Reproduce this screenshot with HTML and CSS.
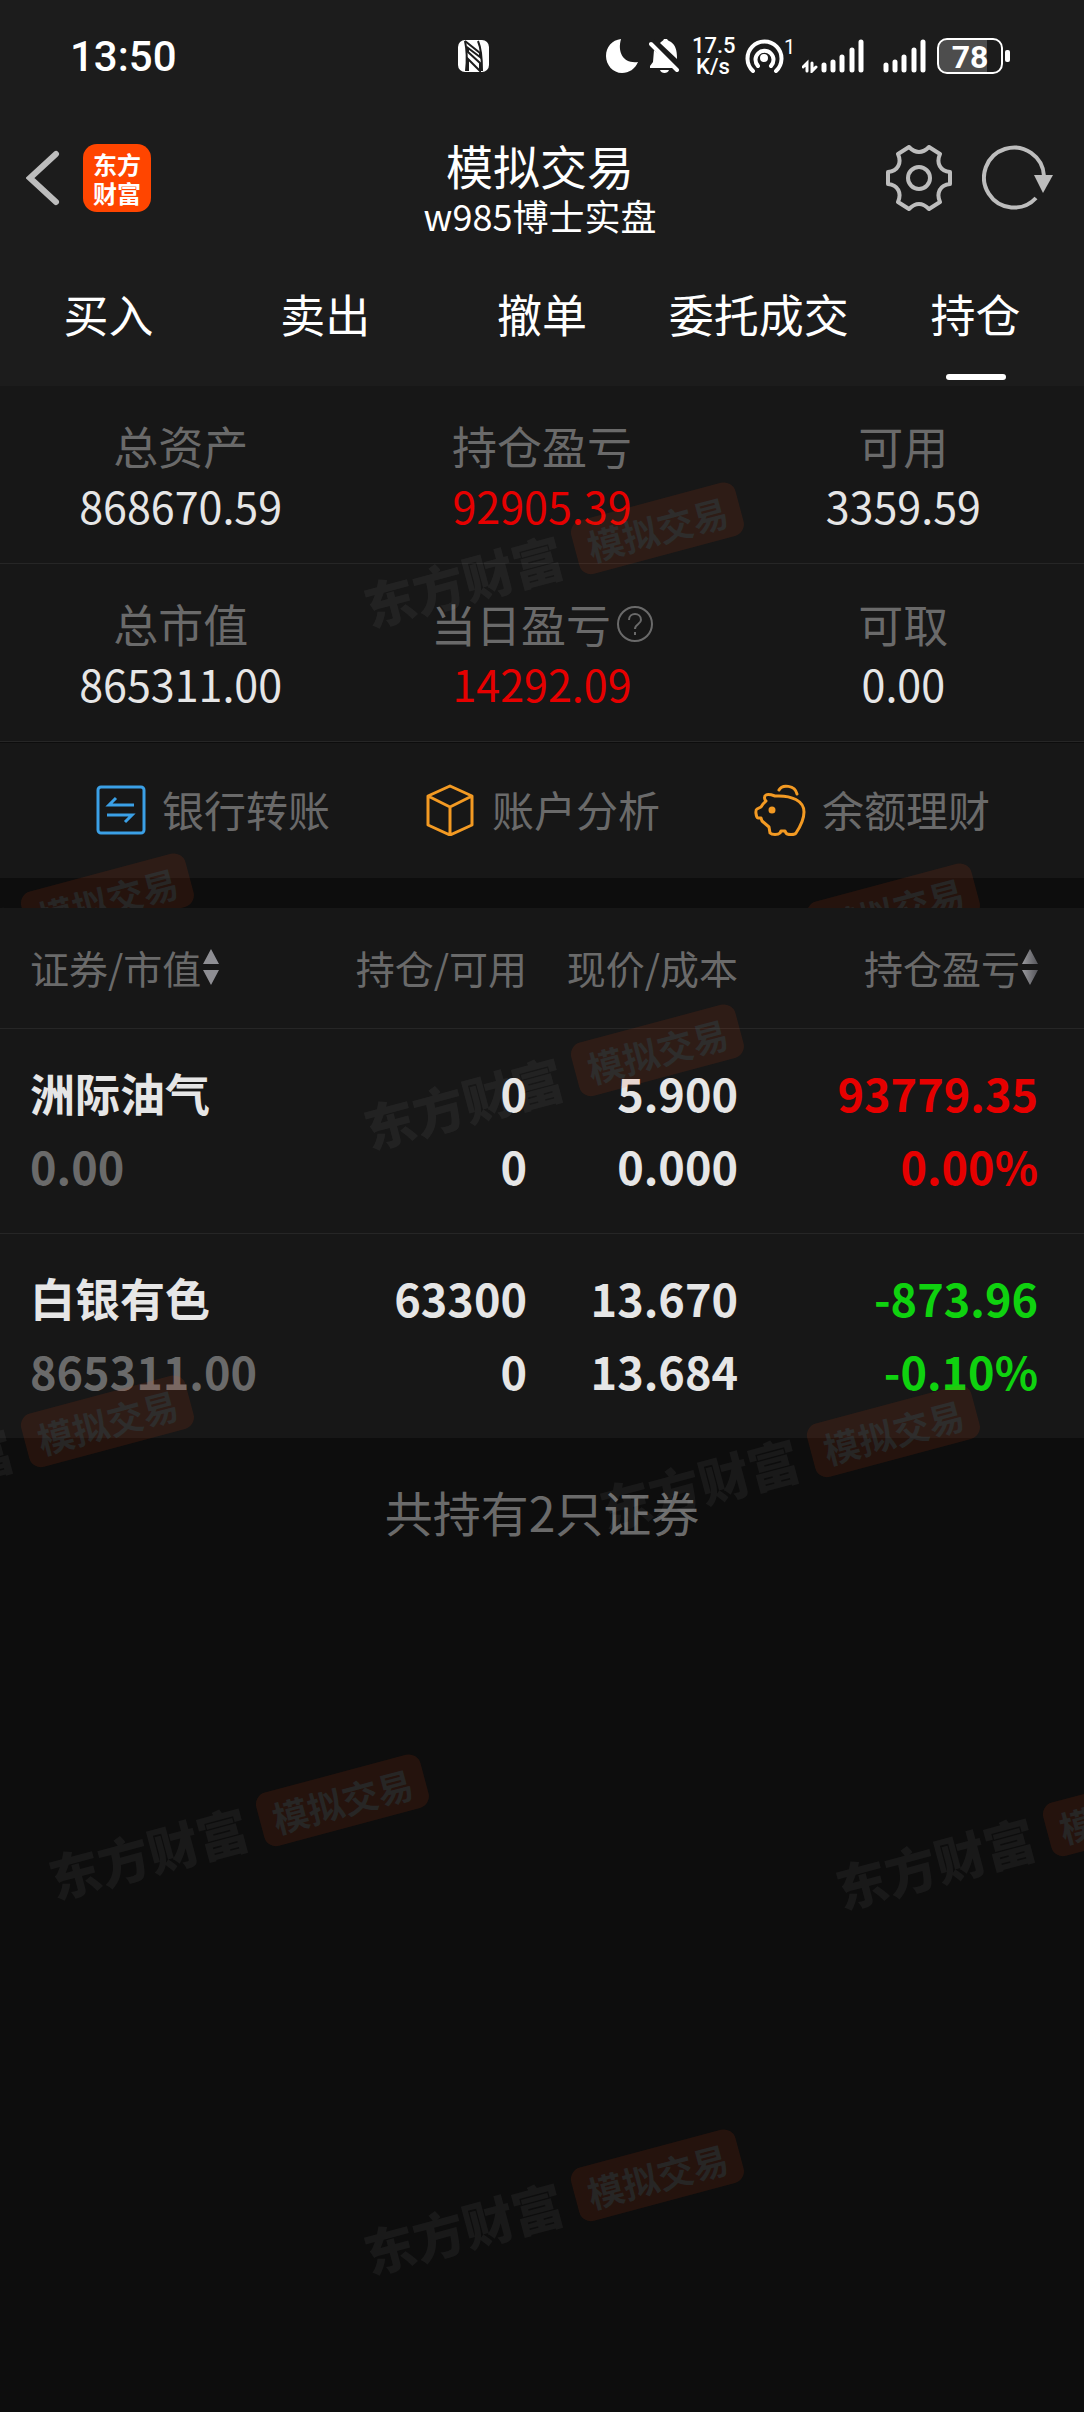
FILE: index.html
```html
<!DOCTYPE html>
<html lang="zh-CN">
<head>
<meta charset="utf-8">
<meta name="viewport" content="width=device-width, initial-scale=1">
<title>模拟交易</title>
<link rel="stylesheet" href="styles.css">
</head>
<body>
<header class="top">
  <div class="status">
    <span class="clock">13:50</span>
    <svg class="nfc" width="32" height="32" viewBox="0 0 32 32" aria-label="NFC">
      <rect x="0" y="0" width="31" height="32" rx="7" fill="#fff"/>
      <path d="M7 1C9 10 9 22 8 31M20 1C23 8 24 20 24 31" fill="none" stroke="#1c1c1c" stroke-width="2"/>
      <path d="M7 1L22 13V17L10 8V12L22 23V31L10 19V31" fill="none" stroke="#1c1c1c" stroke-width="2"/>
    </svg>
    <div class="status-icons">
      <svg width="32" height="34" viewBox="0 0 32 34"><path d="M15 0C11 14 18 25 32 23C29 30 23 34 16 34C7 34 0 26 0 17C0 8 6 1 15 0Z" fill="#fff"/></svg>
      <svg width="32" height="34" viewBox="0 0 32 34"><path d="M11 4C13 2 14 2 15 0h3c1 2 3 2 4 3c4 3 6 7 6 17zM5 11L27 29H1v-2l3-4zM11 31h9c-1 4-8 4-9 0z" fill="#fff"/><path d="M4 2L30 27" stroke="#1c1c1c" stroke-width="4"/><path d="M2 5L28 31" stroke="#fff" stroke-width="4" stroke-linecap="round"/></svg>
      <span class="speed">17.5<br>K/s</span>
      <span class="hotspot">
        <svg width="39" height="34" viewBox="0 0 39 34" fill="none" stroke="#fff" stroke-width="4" stroke-linecap="round"><path d="M8 32A17 17 0 1 1 31 32M13 27A9 9 0 1 1 26 27"/><circle cx="19" cy="19" r="2"/></svg>
        <sup>1</sup>
      </span>
      <svg width="70" height="34" viewBox="0 0 70 34" fill="none" stroke="#fff" stroke-linecap="round"><path d="M5 32V24L1 28M10 24V32L14 28" stroke-width="3"/><path d="M22 26v5M31 23v8M40 18v13M50 11v20M59 3v28" stroke-width="5"/></svg>
      <svg width="43" height="34" viewBox="0 0 43 34" fill="none" stroke="#fff" stroke-linecap="round"><path d="M3 26v5M12 23v8M21 18v13M31 11v20M40 3v28" stroke-width="5"/></svg>
      <span class="battery"><span class="battery-cell">78</span><span class="battery-tip"></span></span>
    </div>
  </div>

  <div class="titlebar">
    <div class="side">
      <button class="icon-btn" aria-label="返回"><svg width="34" height="56" viewBox="0 0 34 56"><path d="M30 4L4 28L30 52" fill="none" stroke="#bdbdbd" stroke-width="6" stroke-linecap="round"/></svg></button>
      <a class="logo" href="#"><span>东方</span><span>财富</span></a>
    </div>
    <div class="title">
      <h1>模拟交易</h1>
      <p>w985博士实盘</p>
    </div>
    <div class="side side-end">
      <button class="icon-btn" aria-label="设置"><svg width="66" height="66" viewBox="0 0 66 66" fill="none" stroke="#bdbdbd" stroke-width="4" stroke-linejoin="round"><path d="M23 2Q33 12 43 2L54 9C50 18 54 26 64 27V39C54 40 50 48 54 57L43 64Q33 54 23 64L12 57C16 48 12 40 2 39V27C12 26 16 18 12 9Z"/><circle cx="33" cy="33" r="11"/></svg></button>
      <button class="icon-btn" aria-label="刷新"><svg width="72" height="66" viewBox="0 0 72 66"><path d="M54 53A30 30 0 1 1 62 31" fill="none" stroke="#bdbdbd" stroke-width="4"/><path d="M52 30H71L61 48Z" fill="#bdbdbd"/></svg></button>
    </div>
  </div>

  <nav class="tabs">
    <a href="#">买入</a>
    <a href="#">卖出</a>
    <a href="#">撤单</a>
    <a href="#">委托成交</a>
    <a href="#" class="active" aria-current="page">持仓</a>
  </nav>
</header>

<main>
  <section class="account">
    <dl class="summary">
      <div><dt>总资产</dt><dd>868670.59</dd></div>
      <div><dt>持仓盈亏</dt><dd class="up">92905.39</dd></div>
      <div><dt>可用</dt><dd>3359.59</dd></div>
    </dl>
    <dl class="summary">
      <div><dt>总市值</dt><dd>865311.00</dd></div>
      <div><dt>当日盈亏<button class="help" aria-label="说明"><svg width="36" height="36" viewBox="1 1 36 36" fill="none" stroke="#6a6a6a" stroke-width="2"><circle cx="19" cy="19" r="17"/><path d="M13 15C13 7 25 7 25 15C25 19 19 19 19 24"/><path d="M19 27v3"/></svg></button></dt><dd class="up">14292.09</dd></div>
      <div><dt>可取</dt><dd>0.00</dd></div>
    </dl>
    <div class="links">
      <a href="#"><svg width="52" height="52" viewBox="0 0 52 52" fill="none" stroke="#3ba0e6" stroke-width="3"><rect x="4" y="3" width="46" height="46" rx="3"/><path d="M40 21H15L22 14M13 31H38L31 38"/></svg>银行转账</a>
      <a href="#"><svg width="52" height="52" viewBox="0 0 52 52" fill="none" stroke="#f39a23" stroke-width="3" stroke-linejoin="round"><path d="M26 2L48 12V41L26 51L4 41V12ZM4 12L26 23L48 12M26 23V51"/></svg>账户分析</a>
      <a href="#"><svg width="52" height="52" viewBox="0 0 52 52" fill="none" stroke="#f39a23" stroke-width="3" stroke-linejoin="round" stroke-linecap="round"><path d="M12 11C14 10 18 11 21 12C38 11 50 17 50 28C50 36 46 43 42 49C41 51 33 51 32 49L31 47H27L26 49C24 51 18 51 16 49L15 43L8 37L7 34H4C2 33 1 26 3 25L7 23L9 20L12 17C10 15 10 12 12 11Z"/><path d="M25 6C28 0 41 1 43 10"/><circle cx="18" cy="26" r="2" fill="#f39a23"/></svg>余额理财</a>
    </div>
    <div class="marks" aria-hidden="true">
      <div class="mark mark-1"><b>东方财富</b><i>模拟交易</i></div>
      <div class="mark mark-2"><b>东方财富</b><i>模拟交易</i></div>
      <div class="mark mark-3"><b>东方财富</b><i>模拟交易</i></div>
    </div>
  </section>

  <section class="holdings">
    <table>
      <colgroup><col><col class="c-qty"><col class="c-price"><col class="c-profit"></colgroup>
      <thead>
        <tr>
          <th scope="col"><button class="sort">证券/市值<svg width="16" height="36" viewBox="0 0 16 36" fill="#8e8e93"><path d="M8 0L16 15H0ZM0 21H16L8 36Z"/></svg></button></th>
          <th scope="col">持仓/可用</th>
          <th scope="col">现价/成本</th>
          <th scope="col"><button class="sort">持仓盈亏<svg width="16" height="36" viewBox="0 0 16 36"><defs><linearGradient id="fade"><stop offset="0" stop-color="#9a9a9e"/><stop offset="1" stop-color="#55555a"/></linearGradient></defs><path d="M8 0L16 15H0ZM0 21H16L8 36Z" fill="url(#fade)"/></svg></button></th>
        </tr>
      </thead>
      <tbody>
        <tr>
          <td><span>洲际油气</span><span class="dim">0.00</span></td>
          <td><span>0</span><span>0</span></td>
          <td><span>5.900</span><span>0.000</span></td>
          <td class="up"><span>93779.35</span><span>0.00%</span></td>
        </tr>
        <tr>
          <td><span>白银有色</span><span class="dim">865311.00</span></td>
          <td><span>63300</span><span>0</span></td>
          <td><span>13.670</span><span>13.684</span></td>
          <td class="down"><span>-873.96</span><span>-0.10%</span></td>
        </tr>
      </tbody>
    </table>
    <p class="count">共持有2只证券</p>
    <div class="marks" aria-hidden="true">
      <div class="mark mark-1"><b>东方财富</b><i>模拟交易</i></div>
      <div class="mark mark-2"><b>东方财富</b><i>模拟交易</i></div>
      <div class="mark mark-3"><b>东方财富</b><i>模拟交易</i></div>
      <div class="mark mark-4"><b>东方财富</b><i>模拟交易</i></div>
      <div class="mark mark-5"><b>东方财富</b><i>模拟交易</i></div>
      <div class="mark mark-6"><b>东方财富</b><i>模拟交易</i></div>
    </div>
  </section>
</main>
</body>
</html>
```
FILE: styles.css
```css
* {
  box-sizing: border-box;
  margin: 0;
  padding: 0;
}

body {
  display: flex;
  flex-direction: column;
  min-height: 100vh;
  background: #0d0d0d;
  color: #e6e6e6;
  font-family: "Noto Sans CJK SC", "Noto Sans", sans-serif;
  font-size: 45px;
}

button {
  background: none;
  border: 0;
  color: inherit;
  font: inherit;
}

a {
  color: inherit;
  text-decoration: none;
}

svg {
  display: block;
  flex: none;
}

.top {
  background: #1c1c1c;
  color: #fff;
}

/* status bar */
.status {
  display: flex;
  align-items: center;
  height: 112px;
  padding: 0 74px 0 70px;
  font-family: Roboto, "Noto Sans CJK SC", sans-serif;
}

.clock {
  width: 388px;
  font-size: 42px;
  font-weight: 500;
}

.status-icons {
  display: flex;
  align-items: center;
  gap: 11px;
  margin-left: auto;
}

.speed {
  width: 42px;
  font-size: 22px;
  font-weight: 500;
  line-height: 21px;
  text-align: center;
}

.hotspot {
  display: flex;
  width: 46px;
}

.hotspot sup {
  font-size: 20px;
  line-height: 16px;
}

.battery {
  display: flex;
  align-items: center;
  gap: 2px;
  width: 73px;
}

.battery-cell {
  width: 66px;
  height: 36px;
  border: 2px solid #fff;
  border-radius: 10px;
  background: linear-gradient(90deg, #4d4d4d 78%, transparent 78%);
  font-size: 32px;
  font-weight: 700;
  line-height: 34px;
  text-align: center;
}

.battery-tip {
  width: 5px;
  height: 12px;
  border-radius: 2px;
  background: #fff;
}

/* title bar */
.titlebar {
  display: flex;
  align-items: center;
  height: 132px;
  padding: 0 30px 0 26px;
}

.side {
  display: flex;
  flex: 1;
  align-items: center;
  gap: 23px;
}

.side-end {
  justify-content: flex-end;
  gap: 30px;
}

.logo {
  display: flex;
  flex-direction: column;
  align-items: center;
  justify-content: center;
  width: 68px;
  height: 68px;
  border-radius: 14px;
  background: #ff4500;
  font-size: 24px;
  font-weight: 700;
  line-height: 29px;
}

.title {
  padding-top: 22px;
  text-align: center;
}

.title h1 {
  font-size: 47px;
  font-weight: 400;
  line-height: 52px;
}

.title p {
  font-size: 36px;
  line-height: 48px;
}

/* tabs */
.tabs {
  display: grid;
  grid-template-columns: repeat(5, 1fr);
  height: 142px;
  text-align: center;
  line-height: 140px;
}

.tabs .active::after {
  content: "";
  display: block;
  width: 60px;
  height: 6px;
  margin: -10px auto 0;
  border-radius: 3px;
  background: #fff;
}

/* account summary */
main {
  display: flex;
  flex: 1;
  flex-direction: column;
}

.account {
  position: relative;
  padding-bottom: 30px;
}

.summary {
  display: grid;
  grid-template-columns: repeat(3, 1fr);
  padding: 30px 0 29px;
  border-bottom: 1px solid #262626;
  background: #171717;
  line-height: 60px;
  text-align: center;
}

.summary dt {
  display: flex;
  align-items: center;
  justify-content: center;
  color: #6a6a6a;
}

.summary dd {
  font-size: 43px;
  line-height: 58px;
}

.help {
  margin-left: 6px;
}

.links {
  display: grid;
  grid-template-columns: repeat(3, 1fr);
  margin-top: 1px;
  padding: 0 47px;
  background: #171717;
  color: #6a6a6a;
  font-size: 42px;
  line-height: 132px;
}

.links a {
  display: flex;
  align-items: flex-start;
  justify-content: center;
  gap: 16px;
  height: 135px;
}

.links svg {
  margin-top: 41px;
}

.up,
.summary .up {
  color: #e60000;
}

.down {
  color: #0fd20f;
}

.dim {
  color: #6a6a6a;
}

/* holdings */
.holdings {
  position: relative;
  flex: 1;
}

table {
  width: 100%;
  border-collapse: collapse;
  table-layout: fixed;
  background: #171717;
}

.c-qty {
  width: 200px;
}

.c-price {
  width: 211px;
}

.c-profit {
  width: 346px;
}

th,
td {
  text-align: right;
}

th {
  height: 120px;
  padding-bottom: 2px;
  border-bottom: 1px solid #262626;
  color: #6a6a6a;
  font-size: 39px;
  font-weight: 400;
}

th:first-child,
td:first-child {
  padding-left: 30px;
  text-align: left;
}

th:last-child,
td:last-child {
  padding-right: 46px;
}

.sort {
  display: inline-flex;
  align-items: center;
  gap: 2px;
}

td {
  padding: 27px 0 31px;
  font-weight: 700;
  line-height: 73px;
}

td span {
  display: block;
}

tbody tr + tr td {
  border-top: 1px solid #262626;
}

.count {
  color: #6a6a6a;
  font-size: 48px;
  line-height: 146px;
  text-align: center;
}

/* slanted brand marks laid over each section */
.marks {
  position: absolute;
  inset: 0;
  overflow: hidden;
  pointer-events: none;
}

.mark {
  position: absolute;
  display: flex;
  align-items: center;
  gap: 14px;
  transform: rotate(-15deg);
  white-space: nowrap;
}

.mark b {
  color: rgba(255, 255, 255, 0.05);
  font-size: 51px;
  font-weight: 900;
  line-height: 60px;
}

.mark i {
  width: 170px;
  border-radius: 12px;
  background: rgba(255, 80, 20, 0.1);
  color: rgba(46, 96, 110, 0.25);
  font-size: 36px;
  font-style: normal;
  font-weight: 700;
  line-height: 55px;
  text-align: center;
}

.mark-1 { left: 358px; top: 140px; }
.mark-2 { left: -192px; top: 511px; }
.mark-3 { left: 594px; top: 521px; }
.mark-4 { left: 43px; top: 890px; }
.mark-5 { left: 830px; top: 900px; }
.mark-6 { left: 358px; top: 1265px; }
```
